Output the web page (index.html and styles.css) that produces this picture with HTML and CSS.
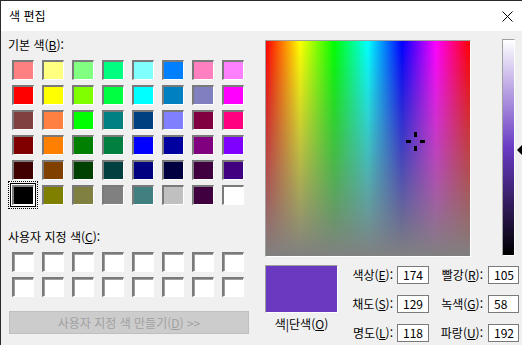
FILE: index.html
```html
<!DOCTYPE html>
<html lang="ko">
<head>
<meta charset="utf-8">
<title>색 편집</title>
<link rel="stylesheet" href="styles.css">
</head>
<body>
<div class="window">
  <div class="titlebar">
    <span class="title">색 편집</span>
    <svg class="close" width="11" height="11" viewBox="0 0 11 11"><path d="M0.5 0.5 L10.5 10.5 M10.5 0.5 L0.5 10.5" stroke="#000" stroke-width="1" fill="none"/></svg>
  </div>
  <div class="body">
    <div class="left">
      <div class="label">기본 색(<u>B</u>):</div>
      <div class="swatches basic">
        <span class="sw" style="background:#ff8080"></span><span class="sw" style="background:#ffff80"></span><span class="sw" style="background:#80ff80"></span><span class="sw" style="background:#00ff80"></span><span class="sw" style="background:#80ffff"></span><span class="sw" style="background:#0080ff"></span><span class="sw" style="background:#ff80c0"></span><span class="sw" style="background:#ff80ff"></span>
        <span class="sw" style="background:#ff0000"></span><span class="sw" style="background:#ffff00"></span><span class="sw" style="background:#80ff00"></span><span class="sw" style="background:#00ff40"></span><span class="sw" style="background:#00ffff"></span><span class="sw" style="background:#0080c0"></span><span class="sw" style="background:#8080c0"></span><span class="sw" style="background:#ff00ff"></span>
        <span class="sw" style="background:#804040"></span><span class="sw" style="background:#ff8040"></span><span class="sw" style="background:#00ff00"></span><span class="sw" style="background:#008080"></span><span class="sw" style="background:#004080"></span><span class="sw" style="background:#8080ff"></span><span class="sw" style="background:#800040"></span><span class="sw" style="background:#ff0080"></span>
        <span class="sw" style="background:#800000"></span><span class="sw" style="background:#ff8000"></span><span class="sw" style="background:#008000"></span><span class="sw" style="background:#008040"></span><span class="sw" style="background:#0000ff"></span><span class="sw" style="background:#0000a0"></span><span class="sw" style="background:#800080"></span><span class="sw" style="background:#8000ff"></span>
        <span class="sw" style="background:#400000"></span><span class="sw" style="background:#804000"></span><span class="sw" style="background:#004000"></span><span class="sw" style="background:#004040"></span><span class="sw" style="background:#000080"></span><span class="sw" style="background:#000040"></span><span class="sw" style="background:#400040"></span><span class="sw" style="background:#400080"></span>
        <span class="sw selected" style="background:#000000"></span><span class="sw" style="background:#808000"></span><span class="sw" style="background:#808040"></span><span class="sw" style="background:#808080"></span><span class="sw" style="background:#408080"></span><span class="sw" style="background:#c0c0c0"></span><span class="sw" style="background:#400040"></span><span class="sw" style="background:#ffffff"></span>
      </div>
      <div class="label custom-label">사용자 지정 색(<u>C</u>):</div>
      <div class="swatches custom">
        <span class="sw"></span><span class="sw"></span><span class="sw"></span><span class="sw"></span><span class="sw"></span><span class="sw"></span><span class="sw"></span><span class="sw"></span>
        <span class="sw"></span><span class="sw"></span><span class="sw"></span><span class="sw"></span><span class="sw"></span><span class="sw"></span><span class="sw"></span><span class="sw"></span>
      </div>
      <button class="define" disabled>사용자 지정 색 만들기(<u>D</u>) &gt;&gt;</button>
    </div>
    <div class="right">
      <div class="pickers">
        <div class="spectrum">
          <svg class="cross" width="204" height="215" viewBox="0 0 204 215">
            <rect x="148" y="91" width="3" height="5" fill="#000"/>
            <rect x="148" y="105" width="3" height="5" fill="#000"/>
            <rect x="140" y="99" width="5" height="3" fill="#000"/>
            <rect x="154" y="99" width="5" height="3" fill="#000"/>
          </svg>
        </div>
        <div class="lum"></div>
        <div class="arrow"></div>
      </div>
      <div class="lower">
        <div class="preview-col">
          <div class="preview"></div>
          <div class="preview-label">색|단색(<u>O</u>)</div>
        </div>
        <div class="fields">
          <span class="flabel">색상(<u>E</u>):</span><span class="field">174</span>
          <span class="flabel">빨강(<u>R</u>):</span><span class="field">105</span>
          <span class="flabel">채도(<u>S</u>):</span><span class="field">129</span>
          <span class="flabel">녹색(<u>G</u>):</span><span class="field">58</span>
          <span class="flabel">명도(<u>L</u>):</span><span class="field">118</span>
          <span class="flabel">파랑(<u>U</u>):</span><span class="field">192</span>
        </div>
      </div>
    </div>
  </div>
</div>
</body>
</html>
```

FILE: styles.css
```css
* { box-sizing: border-box; }
html, body { margin: 0; padding: 0; }
body {
  width: 522px;
  height: 345px;
  overflow: hidden;
  font-family: "Noto Sans CJK KR", "Noto Sans", sans-serif;
  font-size: 12px;
  color: #000;
  background: #f0f0f0;
}
u { text-decoration: underline; text-underline-offset: 1px; }
.window {
  width: 522px;
  height: 345px;
  border-top: 1px solid #2b2b2b;
  border-left: 1px solid #2b2b2b;
  background: #f0f0f0;
  display: flex;
  flex-direction: column;
}
.titlebar {
  height: 30px;
  background: #fff;
  display: flex;
  align-items: center;
  justify-content: space-between;
  padding: 0 9px 0 8px;
  flex: none;
}
.title { line-height: 16px; }
.close { display: block; }
.body {
  display: flex;
  flex: 1;
}
.left {
  width: 264px;
  padding: 6px 0 0 7px;
  flex: none;
}
.label { line-height: 16px; white-space: nowrap; }
.swatches {
  display: grid;
  grid-template-columns: repeat(8, 22px);
  grid-auto-rows: 20px;
  column-gap: 8px;
  row-gap: 5px;
  margin-left: 4px;
}
.basic { margin-top: 7px; }
.custom-label { margin-top: 24px; }
.custom { margin-top: 7px; }
.sw {
  display: block;
  width: 22px;
  height: 20px;
  background: #fff;
  border-top: 2px solid #7a7a7a;
  border-left: 2px solid #7a7a7a;
  border-right: 1px solid #fff;
  border-bottom: 1px solid #fff;
  box-shadow: inset 1px 1px 0 #a0a0a0;
}
.basic .sw { box-shadow: none; }
.sw.selected {
  box-shadow: 0 0 0 1px #fff, 0 0 0 2px #000;
  outline: 1px dotted #000;
  outline-offset: 3px;
}
.define {
  display: block;
  margin: 14px 0 0 1px;
  width: 240px;
  height: 23px;
  padding: 0;
  background: #cccccc;
  border: 1px solid #bfbfbf;
  color: #a0a0a0;
  font-family: inherit;
  font-size: 12px;
  line-height: 16px;
  text-align: center;
}
.right {
  flex: 1;
  display: flex;
  flex-direction: column;
}
.pickers {
  display: flex;
  align-items: flex-start;
  padding-top: 8px;
}
.spectrum {
  position: relative;
  margin-top: 1px;
  width: 206px;
  height: 217px;
  border-top: 1px solid #a0a0a0;
  border-left: 1px solid #a0a0a0;
  border-right: 1px solid #fff;
  border-bottom: 1px solid #fff;
  background:
    linear-gradient(to bottom, rgba(128,128,128,0), #808080),
    linear-gradient(to right, #ff0000 0%, #ffff00 16.67%, #00ff00 33.33%, #00ffff 50%, #0000ff 66.67%, #ff00ff 83.33%, #ff0000 100%);
}
.cross { position: absolute; left: 0; top: 0; }
.lum {
  margin-left: 31px;
  width: 13px;
  height: 217px;
  border-top: 1px solid #a0a0a0;
  border-left: 1px solid #a0a0a0;
  border-right: 1px solid #fff;
  border-bottom: 1px solid #fff;
  background: linear-gradient(to bottom, #ffffff, #6a3bc4 50%, #000000);
}
.arrow {
  margin: 106px 0 0 2px;
  width: 0;
  height: 0;
  border-right: 5px solid #000;
  border-top: 5px solid transparent;
  border-bottom: 5px solid transparent;
}
.lower {
  display: flex;
  margin-top: 8px;
}
.preview-col {
  width: 73px;
  display: flex;
  flex-direction: column;
  align-items: center;
}
.preview {
  width: 73px;
  height: 48px;
  background: #693ac0;
  border-top: 1px solid #a0a0a0;
  border-left: 1px solid #a0a0a0;
  border-right: 1px solid #fff;
  border-bottom: 1px solid #fff;
}
.preview-label {
  margin-top: 3px;
  line-height: 16px;
  white-space: nowrap;
}
.fields {
  margin: 1px 0 0 4px;
  display: grid;
  grid-template-columns: 55px 32px 59px 31px;
  grid-auto-rows: 18px;
  row-gap: 11px;
  align-items: center;
}
.flabel {
  text-align: right;
  padding-right: 4px;
  line-height: 16px;
  white-space: nowrap;
}
.flabel:nth-child(4n+3) { padding-right: 5px; }
.field {
  height: 18px;
  background: #fff;
  border: 1px solid #7a7a7a;
  padding-left: 5px;
  line-height: 16px;
}
```
